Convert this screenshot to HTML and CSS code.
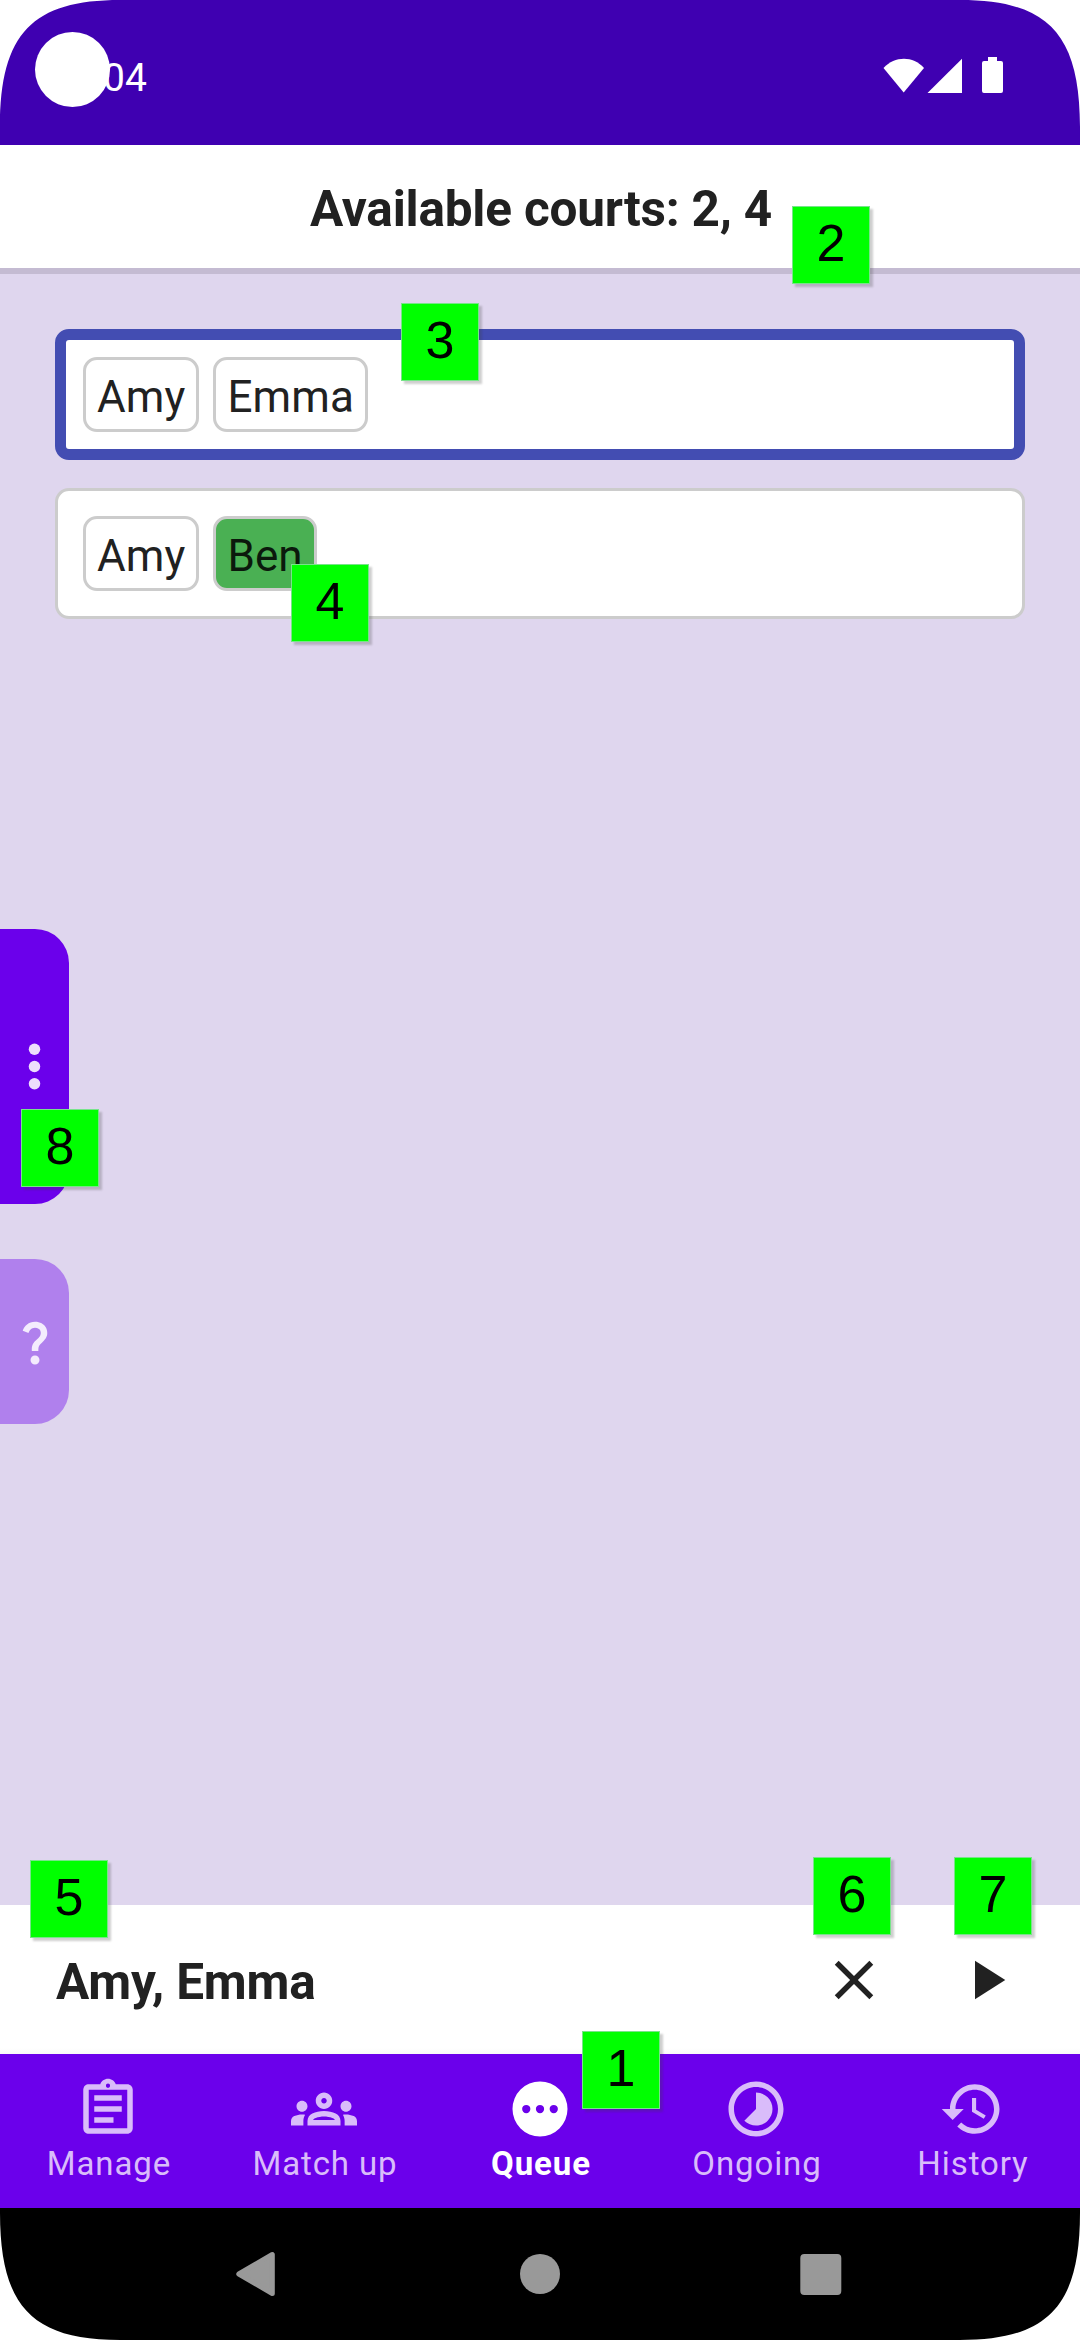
FILE: index.html
```html
<!DOCTYPE html>
<html lang="en">
<head>
<meta charset="utf-8">
<title>Queue</title>
<link rel="stylesheet" href="styles.css">
</head>
<body>
<div class="phone">
  <header class="status-bar">
    <span class="clock">04</span>
    <svg class="status-icons" width="122" height="38" viewBox="0 0 122 38">
      <path d="M0.5 11C12-1.200 30-1.200 41 11L20.700 35.500z"/>
      <path d="M44.500 36H79V1.700z"/>
      <path d="M105 0h9v4h4q2 0 2 2v28q0 2-2 2h-17q-2 0-2-2v-28q0-2 2-2h4z"/>
    </svg>
  </header>

  <h1 class="courts">Available courts: 2, 4</h1>

  <main class="queue">
    <section class="match match-selected">
      <span class="player">Amy</span>
      <span class="player">Emma</span>
    </section>
    <section class="match">
      <span class="player">Amy</span>
      <span class="player player-ready">Ben</span>
    </section>
    <aside class="side-tabs">
      <div class="side-tab side-tab-menu">
        <svg width="69" height="69" viewBox="0 0 24 24"><circle cx="12" cy="6" r="2"/><circle cx="12" cy="12" r="2"/><circle cx="12" cy="18" r="2"/></svg>
      </div>
      <div class="side-tab side-tab-help">
        <svg width="54" height="54" viewBox="0 0 24 24"><path d="M11.070 12.850c.77-1.390 2.250-2.210 3.110-3.440.91-1.290.4-3.700-2.180-3.700-1.690 0-2.520 1.280-2.870 2.340L6.540 6.960C7.250 4.830 9.180 3 11.990 3c2.350 0 3.960 1.070 4.780 2.410.7 1.150 1.110 3.300.03 4.900-1.200 1.770-2.350 2.310-2.970 3.450-.25.46-.35.76-.35 2.240h-2.890c-.01-.78-.13-2.050.48-3.150zM14 20c0 1.100-.9 2-2 2s-2-.9-2-2 .9-2 2-2 2 .9 2 2z"/></svg>
      </div>
    </aside>
  </main>

  <section class="selection">
    <span class="selection-names">Amy, Emma</span>
    <svg class="action" viewBox="0 0 24 24"><path d="M19 6.410L17.590 5 12 10.590 6.410 5 5 6.410 10.590 12 5 17.590 6.410 19 12 13.410 17.590 19 19 17.590 13.410 12z"/></svg>
    <svg class="action" viewBox="0 0 24 24"><path d="M8 5v14l11-7z"/></svg>
  </section>

  <nav class="tabs">
    <div class="tab">
      <svg viewBox="0 0 24 24"><path d="M7 15h7v2H7zm0-4h10v2H7zm0-4h10v2H7zm12-4h-4.180C14.400 1.840 13.300 1 12 1c-1.300 0-2.400.84-2.820 2H5c-.14 0-.27.01-.4.04-.39.08-.74.28-1.010.55-.18.18-.33.4-.43.64-.1.23-.16.49-.16.77v14c0 .27.06.54.16.78s.25.45.43.64c.27.27.62.47 1.010.55.13.02.26.03.4.03h14c1.100 0 2-.9 2-2V5c0-1.100-.9-2-2-2zm-7-.25c.41 0 .75.34.75.75s-.34.75-.75.75-.75-.34-.75-.75.34-.75.75-.75zM19 19H5V5h14v14z"/></svg>
      <span>Manage</span>
    </div>
    <div class="tab">
      <svg viewBox="0 0 24 24"><path d="M4 13c1.100 0 2-.9 2-2s-.9-2-2-2-2 .9-2 2 .9 2 2 2zM5.130 14.100C4.760 14.040 4.390 14 4 14c-.99 0-1.930.21-2.780.58C.48 14.900 0 15.620 0 16.430V18h4.500v-1.610c0-.83.23-1.610.63-2.290zM20 13c1.100 0 2-.9 2-2s-.9-2-2-2-2 .9-2 2 .9 2 2 2zM24 16.430c0-.81-.48-1.530-1.220-1.850C21.930 14.210 20.990 14 20 14c-.39 0-.76.04-1.130.1.4.68.63 1.460.63 2.290V18H24zM16.240 13.650c-1.170-.52-2.610-.9-4.240-.9s-3.070.39-4.240.9C6.680 14.130 6 15.210 6 16.390V18h12v-1.610c0-1.180-.68-2.260-1.760-2.740zM8.070 16c.09-.23.13-.39.91-.69.97-.38 1.990-.56 3.020-.56s2.050.18 3.020.56c.77.3.81.46.91.69zM12 8c.55 0 1 .45 1 1s-.45 1-1 1-1-.45-1-1 .45-1 1-1m0-2c-1.660 0-3 1.340-3 3s1.340 3 3 3 3-1.340 3-3-1.340-3-3-3z"/></svg>
      <span>Match up</span>
    </div>
    <div class="tab tab-active">
      <svg viewBox="0 0 24 24"><path fill-rule="evenodd" d="M12 2a10 10 0 1 0 0 20 10 10 0 0 0 0-20zM7 13.500a1.500 1.500 0 1 1 0-3 1.500 1.500 0 0 1 0 3zm5 0a1.500 1.500 0 1 1 0-3 1.500 1.500 0 0 1 0 3zm5 0a1.500 1.500 0 1 1 0-3 1.500 1.500 0 0 1 0 3z"/></svg>
      <span>Queue</span>
    </div>
    <div class="tab">
      <svg viewBox="0 0 24 24"><path d="M16.240 7.760C15.070 6.590 13.540 6 12 6v6l-4.240 4.240c2.340 2.340 6.140 2.340 8.490 0 2.340-2.340 2.340-6.140-.01-8.480zM12 2C6.480 2 2 6.480 2 12s4.480 10 10 10 10-4.480 10-10S17.520 2 12 2zm0 18c-4.420 0-8-3.580-8-8s3.580-8 8-8 8 3.580 8 8-3.580 8-8 8z"/></svg>
      <span>Ongoing</span>
    </div>
    <div class="tab">
      <svg viewBox="0 0 24 24"><path d="M13 3c-4.970 0-9 4.030-9 9H1l3.890 3.890.07.14L9 12H6c0-3.870 3.130-7 7-7s7 3.130 7 7-3.130 7-7 7c-1.930 0-3.680-.79-4.940-2.060l-1.420 1.420C8.270 19.990 10.510 21 13 21c4.970 0 9-4.030 9-9s-4.030-9-9-9zm-1 5v5l4.280 2.540.72-1.210-3.500-2.080V8H12z"/></svg>
      <span>History</span>
    </div>
  </nav>

  <footer class="system-nav">
    <svg width="42" height="48" viewBox="0 0 42 48"><path d="M.8 24L34.300 4.500V43.500z"/></svg>
    <svg width="42" height="48" viewBox="0 0 42 48"><circle cx="21" cy="24" r="20"/></svg>
    <svg width="42" height="48" viewBox="0 0 42 48"><rect x=".3" y="4" width="41" height="41" rx="4"/></svg>
  </footer>

  <svg class="corner corner-tl" viewBox="0 0 120 127"><path d="M0 127C0 33 33 0 120 0H0z"/></svg>
  <svg class="corner corner-tr" viewBox="0 0 120 127"><path d="M0 127C0 33 33 0 120 0H0z"/></svg>
  <svg class="corner corner-bl" viewBox="0 0 120 127"><path d="M0 127C0 33 33 0 120 0H0z"/></svg>
  <svg class="corner corner-br" viewBox="0 0 120 127"><path d="M0 127C0 33 33 0 120 0H0z"/></svg>
  <div class="camera"></div>

  <span class="pin pin-1">1</span>
  <span class="pin pin-2">2</span>
  <span class="pin pin-3">3</span>
  <span class="pin pin-4">4</span>
  <span class="pin pin-5">5</span>
  <span class="pin pin-6">6</span>
  <span class="pin pin-7">7</span>
  <span class="pin pin-8">8</span>
</div>
</body>
</html>
```
FILE: styles.css
```css
* { box-sizing: border-box; }

body {
  margin: 0;
  background: #fff;
  color: #212121;
  font-family: Roboto, "Liberation Sans", sans-serif;
}

svg { display: block; flex: none; }

.phone {
  position: relative;
  display: flex;
  flex-direction: column;
  width: 1080px;
  height: 2340px;
  overflow: hidden;
}

.status-bar {
  display: flex;
  justify-content: space-between;
  flex: none;
  height: 145px;
  padding: 55px 75px 0 103px;
  background: #3f00b1;
  color: #fff;
}
.clock { font-size: 39px; line-height: 46px; }
.status-icons { margin-top: 2px; fill: #fff; }

.courts {
  flex: none;
  height: 123px;
  margin: 0;
  padding-left: 2px;
  font-size: 49.500px;
  font-weight: 700;
  letter-spacing: -0.200px;
  line-height: 129px;
  text-align: center;
}

.queue {
  position: relative;
  display: flex;
  flex-direction: column;
  gap: 28px;
  flex: none;
  height: 1637px;
  padding: 55px 55px 0;
  border-top: 6px solid #c4bbd2;
  background: #dfd6ee;
}
.match {
  display: flex;
  align-items: center;
  gap: 14px;
  height: 131px;
  padding: 0 25px;
  border: 3px solid #ccc;
  border-radius: 14px;
  background: #fff;
}
.match-selected {
  padding: 0 17px;
  border: 11px solid #434db2;
}
.player {
  height: 75px;
  padding: 0 11px;
  border: 3px solid #ccc;
  border-radius: 14px;
  font-size: 44px;
  letter-spacing: 0.100px;
  line-height: 75px;
}
.player-ready { background: #4ab053; color: #0b190c; }

.side-tabs {
  position: absolute;
  top: 655px;
  left: 0;
  display: flex;
  flex-direction: column;
  gap: 55px;
}
.side-tab {
  display: flex;
  align-items: center;
  justify-content: center;
  width: 69px;
  border-radius: 0 34px 34px 0;
}
.side-tab-menu { height: 275px; background: #6b00eb; fill: #eddefc; }
.side-tab-help { height: 165px; background: #b080ed; fill: #f4ecfd; }

.selection {
  display: flex;
  align-items: center;
  gap: 66px;
  flex: none;
  height: 149px;
  padding: 0 61px 0 55px;
  background: linear-gradient(#fff 0, #fff 143px, #f9f9f9 149px);
}
.selection-names {
  flex: 1;
  font-size: 49.500px;
  font-weight: 700;
  letter-spacing: -0.200px;
  line-height: 58px;
  padding: 5px 0 0 1px;
}
.action { width: 66px; height: 66px; fill: #212121; }

.tabs {
  display: grid;
  grid-template-columns: repeat(5, 1fr);
  flex: none;
  height: 154px;
  padding-top: 21.500px;
  background: #6b00eb;
  color: #d9bcfa;
  fill: #d9bcfa;
  font-size: 33px;
  letter-spacing: 0.900px;
  line-height: 38px;
}
.tab { display: flex; flex-direction: column; align-items: center; gap: 3px; }
.tab svg { width: 66px; height: 66px; }
.tab span { padding-left: 2px; }
.tab-active { color: #fff; fill: #fff; font-weight: 700; }

.system-nav {
  display: flex;
  justify-content: space-between;
  flex: none;
  height: 132px;
  padding: 42px 238px 0;
  background: #000;
  fill: #999;
}
.system-nav svg { overflow: visible; }
.system-nav path { stroke: #999; stroke-width: 5px; stroke-linejoin: round; }

.corner { position: absolute; width: 120px; height: 127px; fill: #fff; }
.corner-tl { top: 0; left: 0; }
.corner-tr { top: 0; right: 0; transform: scaleX(-1); }
.corner-bl { bottom: 0; left: 0; transform: scaleY(-1); }
.corner-br { bottom: 0; right: 0; transform: scale(-1); }

.camera {
  position: absolute;
  top: 32px;
  left: 35px;
  width: 75px;
  height: 75px;
  border-radius: 50%;
  background: #fff;
}

.pin {
  position: absolute;
  width: 78px;
  height: 78px;
  border: 1px solid #78e48a;
  background: #0f0;
  box-shadow: 3px 3px 2px rgba(60, 60, 60, 0.25);
  color: #000;
  font-family: "Liberation Sans", Arial, sans-serif;
  font-size: 52px;
  line-height: 73px;
  text-align: center;
}
.pin-1 { left: 582px; top: 2031px; }
.pin-2 { left: 792px; top: 206px; }
.pin-3 { left: 401px; top: 303px; }
.pin-4 { left: 291px; top: 564px; }
.pin-5 { left: 30px; top: 1860px; }
.pin-6 { left: 813px; top: 1857px; }
.pin-7 { left: 954px; top: 1857px; }
.pin-8 { left: 21px; top: 1109px; }
```
